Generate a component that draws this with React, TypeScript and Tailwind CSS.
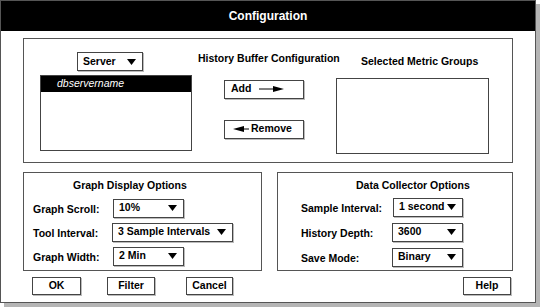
import React from "react";

const Arrow = () => (
  <svg width="9" height="6" viewBox="0 0 9 6" className="shrink-0">
    <polygon points="0,0 9,0 4.5,6" fill="#000" />
  </svg>
);

function Drop({ label, w, h = 19 }: { label: string; w: number; h?: number }) {
  return (
    <div
      className="flex items-center justify-between border border-[#444] bg-white pl-[5px] pr-[6px] shadow-[1px_1px_0_#bbb]"
      style={{ width: w, height: h }}
    >
      <span className="whitespace-nowrap">{label}</span>
      <Arrow />
    </div>
  );
}

function Btn({ label, w }: { label: string; w: number }) {
  return (
    <div
      className="flex h-[18px] items-center justify-center border border-[#444] bg-white shadow-[1px_1px_0_#bbb]"
      style={{ width: w }}
    >
      {label}
    </div>
  );
}

function Row({ label, children, lw }: { label: string; children: React.ReactNode; lw: number }) {
  return (
    <div className="flex h-[19px] items-center">
      <div className="pt-[4px]" style={{ width: lw }}>
        {label}
      </div>
      {children}
    </div>
  );
}

export default function App() {
  return (
    <div
      className="relative h-[307px] w-[540px] bg-white text-[10.5px] font-bold text-black"
      style={{ fontFamily: '"Liberation Sans", Arial, sans-serif' }}
    >
      <div className="flex h-[303px] w-[536px] flex-col border border-[#555] bg-white shadow-[4px_4px_0_#b5b5b5]">
        <div className="flex h-[30px] shrink-0 items-center justify-center bg-black text-[12px] text-white">
          Configuration
        </div>

        {/* Top panel */}
        <div className="ml-[22px] mt-[7px] flex h-[125px] w-[490px] shrink-0 border border-[#555]">
          <div className="ml-[16px] flex w-[152px] flex-col">
            <div className="ml-[37px] mt-[13px]">
              <Drop label="Server" w={66} />
            </div>
            <div className="mt-[4px] h-[76px] border border-[#444]">
              <div className="h-[16px] bg-black pl-[16px] text-[10.5px] font-normal italic leading-[14px] text-white">
                dbservername
              </div>
            </div>
          </div>
          <div className="flex w-[144px] flex-col">
            <div className="mt-[12px] whitespace-nowrap pl-[6px]">History Buffer Configuration</div>
            <div className="ml-[32px] mt-[13px] flex h-[19px] w-[80px] items-center border border-[#444] pl-[6px] shadow-[1px_1px_0_#bbb]">
              <span>Add</span>
              <svg width="26" height="8" viewBox="0 0 26 8" className="ml-[8px]">
                <line x1="0" y1="4" x2="15" y2="4" stroke="#000" strokeWidth="1" />
                <polygon points="14,1 25,4 14,7" fill="#000" />
              </svg>
            </div>
            <div className="ml-[32px] mt-[21px] flex h-[19px] w-[80px] items-center border border-[#444] pl-[7px] shadow-[1px_1px_0_#bbb]">
              <svg width="18" height="8" viewBox="0 0 18 8">
                <polygon points="1,4 12,1 12,7" fill="#000" />
                <line x1="11" y1="4" x2="17" y2="4" stroke="#000" strokeWidth="1" />
              </svg>
              <span className="ml-[1px]">Remove</span>
            </div>
          </div>
          <div className="flex flex-col">
            <div className="ml-[25px] mt-[15px] whitespace-nowrap">Selected Metric Groups</div>
            <div className="mt-[8px] h-[76px] w-[153px] border border-[#444]" />
          </div>
        </div>

        {/* Bottom panels */}
        <div className="ml-[22px] mt-[9px] flex shrink-0 gap-[15px]">
          <div className="flex h-[99px] w-[239px] flex-col border border-[#555] pl-[9px]">
            <div className="mt-[5px] pl-[40px]">Graph Display Options</div>
            <div className="mt-[5px] flex flex-col gap-[5px]">
              <Row label="Graph Scroll:" lw={80}>
                <Drop label="10%" w={71} />
              </Row>
              <Row label="Tool Interval:" lw={79}>
                <Drop label="3 Sample Intervals" w={121} />
              </Row>
              <Row label="Graph Width:" lw={80}>
                <Drop label="2 Min" w={71} />
              </Row>
            </div>
          </div>
          <div className="flex h-[99px] w-[236px] flex-col border border-[#555] pl-[23px]">
            <div className="mt-[5px] pl-[55px]">Data Collector Options</div>
            <div className="mt-[4px] flex flex-col gap-[6px]">
              <Row label="Sample Interval:" lw={92}>
                <Drop label="1 second" w={70} />
              </Row>
              <Row label="History Depth:" lw={91}>
                <Drop label="3600" w={71} />
              </Row>
              <Row label="Save Mode:" lw={91}>
                <Drop label="Binary" w={71} />
              </Row>
            </div>
          </div>
        </div>

        {/* Buttons */}
        <div className="ml-[31px] mt-[6px] flex shrink-0">
          <Btn label="OK" w={49} />
          <div className="ml-[26px]">
            <Btn label="Filter" w={48} />
          </div>
          <div className="ml-[31px]">
            <Btn label="Cancel" w={47} />
          </div>
          <div className="ml-[230px]">
            <Btn label="Help" w={48} />
          </div>
        </div>
      </div>
    </div>
  );
}
